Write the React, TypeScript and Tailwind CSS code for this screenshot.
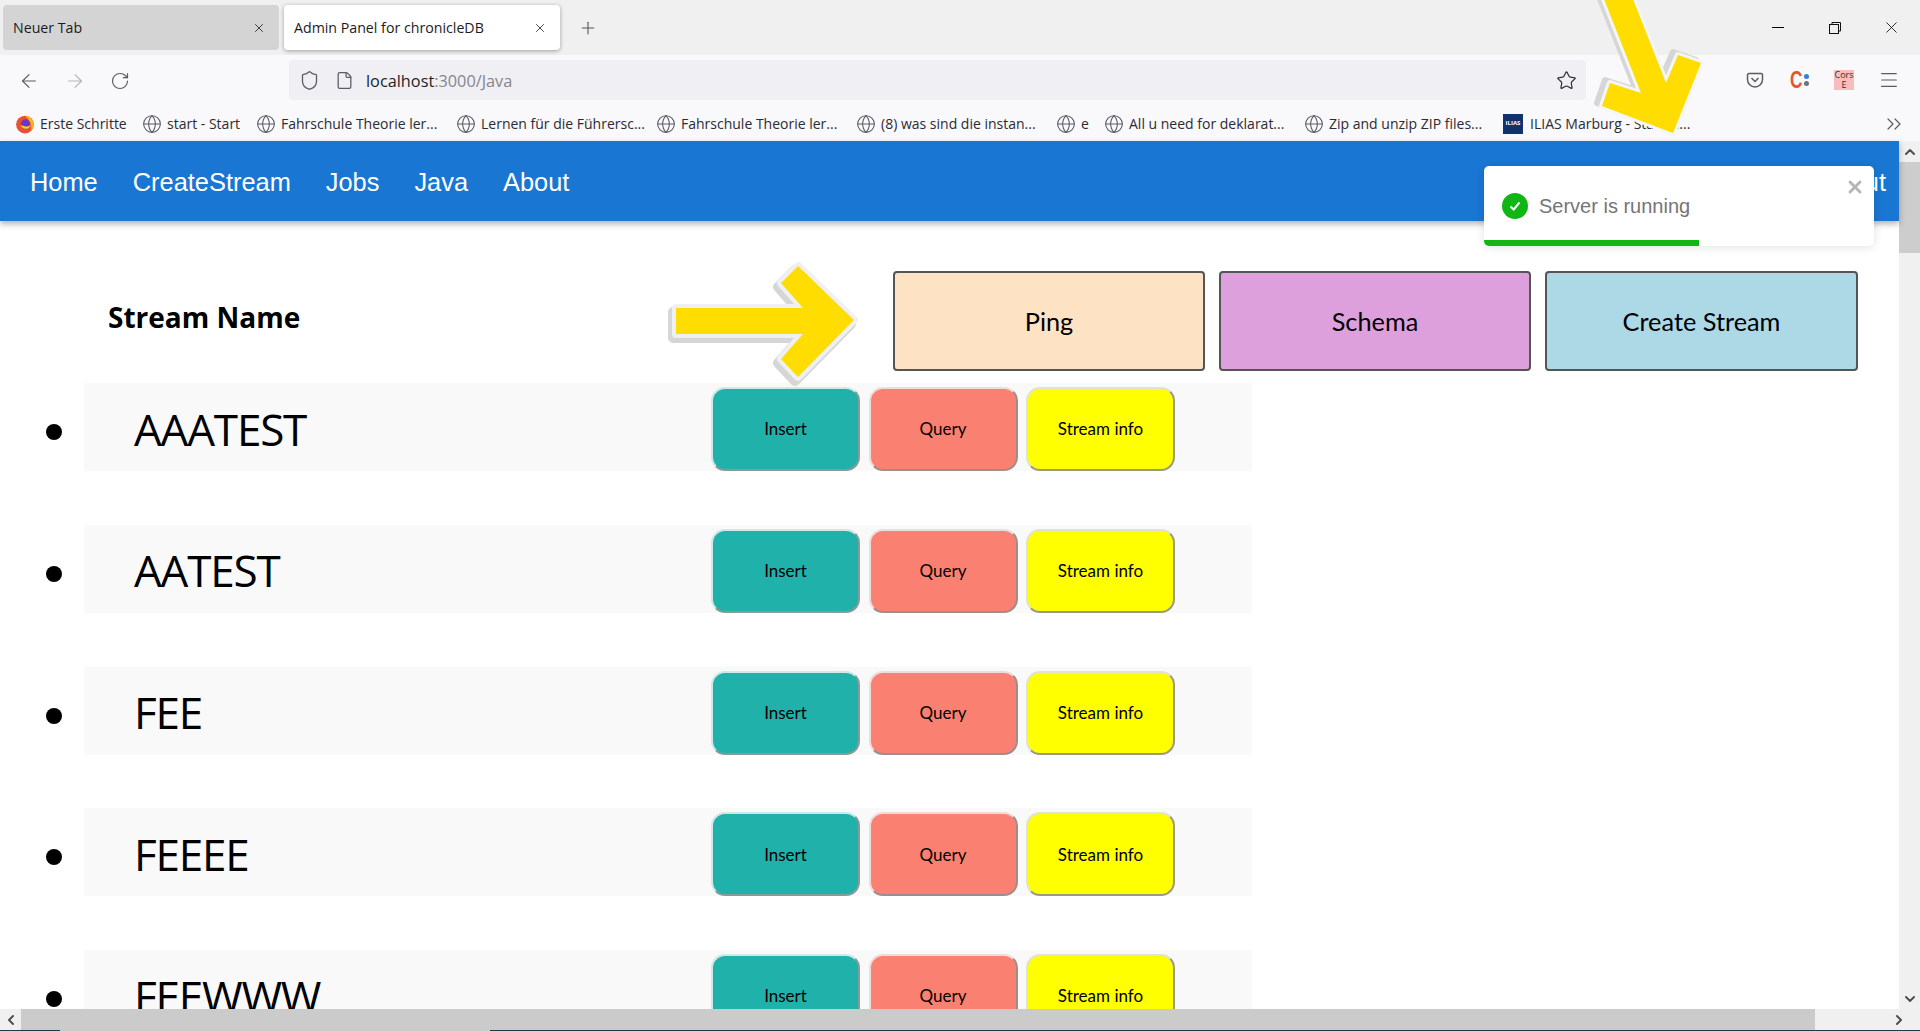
import React from "react";
import { ArrowLeft, ArrowRight, ChevronDown, ChevronLeft, ChevronRight, ChevronUp, ChevronsRight, File, Globe, Menu, Plus, RotateCw, Shield, Star, X } from "lucide-react";

const bookmarks = [
  { label: "start - Start", width: "w-[114px]" },
  { label: "Fahrschule Theorie ler...", width: "w-[200px]" },
  { label: "Lernen für die Führersc...", width: "w-[200px]" },
  { label: "Fahrschule Theorie ler...", width: "w-[200px]" },
  { label: "(8) was sind die instan...", width: "w-[200px]" },
  { label: "e", width: "w-[48px]" },
  { label: "All u need for deklarat...", width: "w-[200px]" },
  { label: "Zip and unzip ZIP files...", width: "w-[200px]" },
];

const streams = ["AAATEST", "AATEST", "FEE", "FEEEE", "FEEWWW"];

function FirefoxLogo() {
  return (
    <svg width="20" height="20" viewBox="0 0 18 18" className="shrink-0">
      <circle cx="9" cy="9.500" r="8" fill="#e8502f" />
      <path d="M9 1.500c4.500 0 8 3.500 8 8 0 2-1 4-2.500 5.300C15.500 10 13 5 9 1.500z" fill="#ffb01f" />
      <circle cx="9.500" cy="9" r="4.200" fill="#6a35c9" />
      <path d="M5 10c1 3 4 4 6.500 3 1.500-.6 2.500-2 2.500-3.500-1 1.500-2.500 2-4 1.800C8 11 6.500 10.500 5 10z" fill="#ffc93a" />
    </svg>
  );
}

function TabBar() {
  return (
    <div className="relative h-[55px] shrink-0 bg-[#f0f0f0] flex items-start pl-[3px] pt-[5px] gap-[5px] text-[14.200px] text-[#1b1b1f]">
      <div className="w-[276px] h-[45px] rounded bg-[#d4d4d4] flex items-center justify-between pl-[10px] pr-[13px]">
        <span>Neuer Tab</span>
        <X size={14} strokeWidth={1.4} />
      </div>
      <div className="w-[276px] h-[45px] rounded bg-white shadow-[0_1px_4px_rgba(0,0,0,0.35)] flex items-center justify-between pl-[10px] pr-[13px]">
        <span>Admin Panel for chronicleDB</span>
        <X size={14} strokeWidth={1.4} />
      </div>
      <div className="w-[46px] h-[45px] flex items-center justify-center text-[#555]">
        <Plus size={20} strokeWidth={1.3} />
      </div>
      <div className="ml-auto h-[45px] flex items-center text-[#111]">
        <div className="w-[57px] flex justify-center"><div className="w-[12px] h-px bg-black" /></div>
        <div className="w-[57px] flex justify-center">
          <svg width="12" height="12" viewBox="0 0 12 12" fill="none" stroke="#111" strokeWidth="1">
            <rect x="0.500" y="2.500" width="9" height="9" />
            <path d="M3 2.500V.500h8.500V9H9.500" />
          </svg>
        </div>
        <div className="w-[57px] flex justify-center"><X size={19} strokeWidth={1.1} /></div>
      </div>
    </div>
  );
}

function Toolbar() {
  return (
    <div className="h-[45px] shrink-0 bg-[#f9f9fb] flex items-start pt-[5px] text-[#5b5b66]">
      <div className="w-[289px] h-[40px] flex items-center pl-[18px] pt-[2px] gap-[24px]">
        <ArrowLeft size={22} strokeWidth={1.3} />
        <ArrowRight size={22} strokeWidth={1.3} className="text-[#b5b5bb]" />
        <RotateCw size={20} strokeWidth={1.4} />
      </div>
      <div className="w-[1297px] h-[40px] rounded bg-[#f0f0f4] flex items-center pl-[10px] pr-[9px] text-[16.300px]">
        <Shield size={21} strokeWidth={1.5} />
        <File size={19} strokeWidth={1.6} className="ml-[15px]" />
        <span className="ml-[12px] pt-[2px] text-[#1f1f25]">
          localhost<span className="text-[#85858c]">:3000/Java</span>
        </span>
        <Star size={21} strokeWidth={1.4} className="ml-auto text-[#333]" />
      </div>
      <div className="flex-1 h-[40px] flex items-center pl-[160px]">
        <svg width="18" height="18" viewBox="0 0 18 18" fill="none" stroke="#5b5b66" strokeWidth="1.5" className="shrink-0">
          <path d="M3 2.500h12a1.500 1.500 0 0 1 1.500 1.500v4.500a7.500 7.500 0 0 1-15 0V4A1.500 1.500 0 0 1 3 2.500z" />
          <path d="M5.500 7 9 10.500 12.500 7" />
        </svg>
        <div className="ml-[26px] w-[20px] flex items-center gap-[1px]">
          <span className="font-['Liberation_Sans',sans-serif] text-[23px] font-bold leading-none text-[#e8532b] scale-x-75 origin-left w-[13px]">C</span>
          <span className="flex flex-col gap-[2px]">
            <span className="w-[5px] h-[5px] rounded-full bg-[#3a7bd5]" />
            <span className="w-[5px] h-[5px] rounded-full bg-[#6b7280]" />
          </span>
        </div>
        <div className="ml-[24px] w-[20px] h-[20px] bg-[#f8bcbc] text-[#333] text-[9px] leading-[10px] text-center flex flex-col justify-center">
          <span>Cors</span>
          <span>E</span>
        </div>
        <Menu size={22} strokeWidth={1.3} className="ml-[24px]" />
      </div>
    </div>
  );
}

function BookmarksBar() {
  return (
    <div className="relative h-[41px] shrink-0 bg-[#f9f9fb] flex items-center pl-[15px] pt-[6px] text-[14px] text-[#2b2b33] whitespace-nowrap">
      <div className="w-[126px] flex items-center gap-[5px]">
        <FirefoxLogo />
        <span>Erste Schritte</span>
      </div>
      {bookmarks.map((b, i) => (
        <div key={i} className={`${b.width} flex items-center gap-[5px] pl-[1px]`}>
          <Globe size={20} strokeWidth={1.3} className="shrink-0 text-[#5b5b66]" />
          <span>{b.label}</span>
        </div>
      ))}
      <div className="flex items-center gap-[7px]">
        <div className="w-[20px] h-[20px] bg-[#12326e] text-white text-[6px] font-bold flex items-center justify-center shrink-0">ILIAS</div>
        <span>ILIAS Marburg - Startse...</span>
      </div>
      <ChevronsRight size={24} strokeWidth={1.2} className="absolute right-[14px] text-[#5b5b66]" />
    </div>
  );
}

function NavBar() {
  return (
    <div className="h-[80px] shrink-0 bg-[#1976d2] shadow-[0_3px_6px_rgba(0,0,0,0.3)] flex items-center pl-[30px] pr-[13px] pt-[2px] gap-[35px] text-white text-[25.400px] font-['Liberation_Sans',sans-serif] z-10">
      <span>Home</span>
      <span>CreateStream</span>
      <span>Jobs</span>
      <span>Java</span>
      <span>About</span>
      <span className="ml-auto">Logout</span>
    </div>
  );
}

function StreamRow({ name }: { name: string }) {
  return (
    <div className="flex items-center shrink-0">
      <div className="ml-[46px] mr-[22px] mt-[10px] w-[16px] h-[16px] rounded-full bg-black shrink-0" />
      <div className="w-[1168px] h-[88px] bg-[#f9f9f9] flex items-start pt-[4px]">
        <div className="w-[629px] h-[83px] flex items-center pl-[50px] text-[44px] leading-none font-normal tracking-[-1.200px] text-black">{name}</div>
        <div className="-ml-[2px] flex gap-[8.500px] text-[17px] text-black font-['Lato',sans-serif]">
          <button className="w-[149px] h-[84px] rounded-[14px] border-2 border-t-[#cfe9e7] border-l-[#cfe9e7] border-r-[#8a9a99] border-b-[#8a9a99] bg-[#20b2aa]">Insert</button>
          <button className="w-[149px] h-[84px] rounded-[14px] border-2 border-t-[#eedcd9] border-l-[#eedcd9] border-r-[#9a8f8d] border-b-[#9a8f8d] bg-[#fa8072]">Query</button>
          <button className="w-[149px] h-[84px] rounded-[14px] border-2 border-t-[#e2e2d0] border-l-[#e2e2d0] border-r-[#9a9a80] border-b-[#9a9a80] bg-[#ffff00]">Stream info</button>
        </div>
      </div>
    </div>
  );
}

function Content() {
  return (
    <div className="flex-1 min-h-0 overflow-hidden bg-white font-['Open_Sans',sans-serif]">
      <div className="flex mt-[50px] h-[100px]">
        <div className="w-[893px] pl-[108px] pt-[25px] text-[28px] font-bold leading-[42px] text-black">Stream Name</div>
        <div className="flex gap-[14px] text-[25.300px] text-black font-['Lato',sans-serif]">
          <button className="w-[312px] h-[100px] pt-[2px] rounded border-2 border-[#555] bg-[#fde2c3]">Ping</button>
          <button className="w-[312px] h-[100px] pt-[2px] rounded border-2 border-[#555] bg-[#dda0dd]">Schema</button>
          <button className="w-[313px] h-[100px] pt-[2px] rounded border-2 border-[#555] bg-[#add8e6]">Create Stream</button>
        </div>
      </div>
      <div className="flex flex-col gap-[53.800px] mt-[12px]">
        {streams.map((s) => (
          <StreamRow key={s} name={s} />
        ))}
      </div>
    </div>
  );
}

function Toast() {
  return (
    <div className="absolute left-[1484px] top-[166px] w-[390px] h-[80px] bg-white rounded-[5px] shadow-[0_1px_10px_rgba(0,0,0,0.12)] overflow-hidden z-20 font-['Liberation_Sans',sans-serif]">
      <div className="flex items-center h-[74px] pl-[18px] gap-[11px] pt-[6px]">
        <div className="w-[26px] h-[26px] rounded-full bg-[#0fb614] flex items-center justify-center">
          <svg width="14" height="14" viewBox="0 0 14 14" fill="none" stroke="#fff" strokeWidth="2">
            <path d="M2.500 7.500 5.700 10.500 11.500 3.500" />
          </svg>
        </div>
        <span className="text-[20px] text-[#757575]">Server is running</span>
      </div>
      <X size={20} strokeWidth={3.4} className="absolute right-[9px] top-[11px] text-[#b5b5b5]" />
      <div className="absolute left-0 bottom-0 w-[215px] h-[6px] bg-[#0fb614]" />
    </div>
  );
}

// the two yellow sticker arrows that sit on top of the screenshot
function Arrows() {
  const right = "676,308 803,308 781,283 798,266 854,320 798,377 781,359 803,334 676,334";
  const down = "1602,-6 1631,-6 1666,83 1678,55 1701,63 1673,133 1602,106 1610,83 1641,93";
  return (
    <svg width="1920" height="1031" viewBox="0 0 1920 1031" className="absolute left-0 top-0 z-30 pointer-events-none">
      <g strokeLinejoin="round">
        <polygon points={right} transform="translate(-3 4)" fill="#d6d6d6" stroke="#d6d6d6" strokeWidth="10" />
        <polygon points={right} fill="#ffdd00" stroke="#eef0f1" strokeWidth="8" paintOrder="stroke" />
        <polygon points={down} transform="translate(-5 -3)" fill="#d6d6d6" stroke="#d6d6d6" strokeWidth="6" />
        <polygon points={down} fill="#ffdd00" stroke="#f4f5f5" strokeWidth="6" paintOrder="stroke" />
      </g>
    </svg>
  );
}

export default function App() {
  return (
    <div className="relative w-screen h-screen overflow-hidden flex flex-col bg-white font-['Open_Sans',sans-serif]">
      <TabBar />
      <Toolbar />
      <BookmarksBar />
      <div className="flex-1 min-h-0 flex">
        <div className="flex-1 min-w-0 flex flex-col">
          <NavBar />
          <Content />
        </div>
        <div className="w-[21px] shrink-0 bg-[#f0f0f0] flex flex-col items-center text-[#505050]">
          <div className="h-[21px] flex items-center"><ChevronUp size={16} strokeWidth={3} /></div>
          <div className="w-full h-[91px] bg-[#cdcdcd]" />
          <div className="mt-auto h-[21px] flex items-center"><ChevronDown size={16} strokeWidth={3} /></div>
        </div>
      </div>
      <div className="h-[21px] shrink-0 bg-[#f0f0f0] flex items-center text-[#505050]">
        <div className="w-[21px] flex justify-center"><ChevronLeft size={16} strokeWidth={3} /></div>
        <div className="w-[1794px] h-full bg-[#cbcbcb]" />
        <div className="ml-auto w-[42px] flex justify-center"><ChevronRight size={16} strokeWidth={3} /></div>
      </div>
      <div className="h-px shrink-0 flex">
        <div className="w-[60px] bg-[#1f3a4d]" />
        <div className="w-[430px] bg-[#cbcbcb]" />
        <div className="flex-1 bg-[#1f3a4d]" />
      </div>
      <Toast />
      <Arrows />
    </div>
  );
}
